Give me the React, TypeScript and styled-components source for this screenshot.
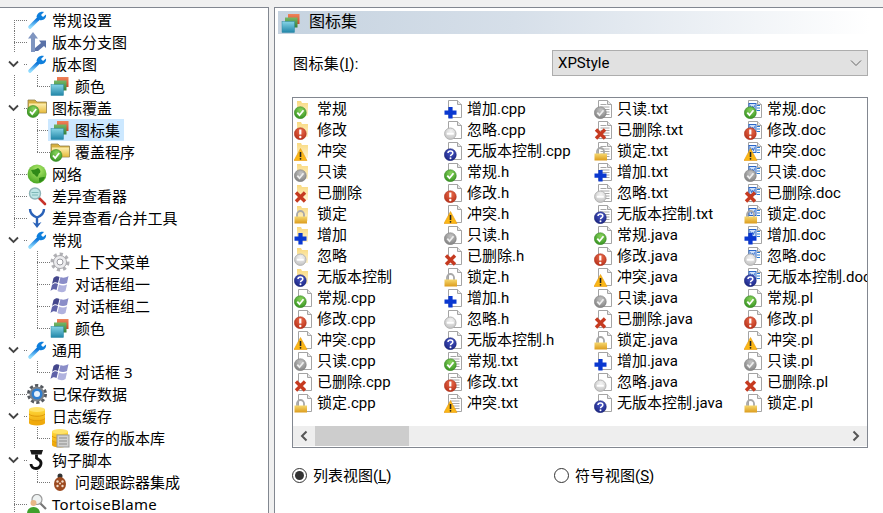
import React from 'react';
import styled, { createGlobalStyle } from 'styled-components';

const GlobalStyle = createGlobalStyle`
  html, body {
    margin: 0;
    padding: 0;
    background: #f0f0f0;
  }
  body {
    font-family: "Noto Sans", "Noto Sans CJK SC", sans-serif;
    font-size: 15px;
    color: #000;
  }
`;

const Defs = styled.svg`
  display: block;
  width: 0;
  height: 0;
`;

const Window = styled.div`
  display: flex;
  width: 883px;
  height: 513px;
  padding-top: 7px;
  box-sizing: border-box;
  overflow: hidden;
`;

const TreePanel = styled.div`
  width: 269px;
  box-sizing: border-box;
  padding-top: 1px;
  background: #fff;
  border-top: 1px solid #828790;
  border-right: 1px solid #828790;
  overflow: hidden;
`;

const TreeRow = styled.div`
  display: flex;
  align-items: center;
  height: 22px;
`;

const dots = 'repeating-linear-gradient(to bottom, #777 0 1px, transparent 1px 2px)';
const hdots = 'repeating-linear-gradient(to right, #777 0 1px, transparent 1px 2px)';

type Line = 'none' | 'down' | 'up' | 'full';

const lineSize: Record<Line, string> = { none: '0 0', down: '1px 11px', up: '1px 11px', full: '1px 22px' };
const lineTop: Record<Line, string> = { none: '0', down: '11px', up: '0', full: '0' };

const Gutter = styled.div<{ $w: number; $x: number; $line: Line; $tick: number }>`
  display: flex;
  align-items: center;
  flex: none;
  width: ${p => p.$w}px;
  height: 22px;
  background-image: ${dots}, ${hdots};
  background-repeat: no-repeat;
  background-size: ${p => lineSize[p.$line]}, ${p => p.$tick}px 1px;
  background-position:
    ${p => p.$x}px ${p => lineTop[p.$line]},
    ${p => p.$w - p.$tick}px 11px;
`;

const Chevron = styled.svg`
  width: 11px;
  height: 8px;
  margin-left: 8px;
`;

const Node = styled.div<{ $selected?: boolean }>`
  display: flex;
  align-items: center;
  height: 22px;
  margin-left: ${p => (p.$selected ? '-2px' : '0')};
  padding: ${p => (p.$selected ? '0 0 0 2px' : '0')};
  background: ${p => (p.$selected ? '#cce8ff' : 'transparent')};
  width: ${p => (p.$selected ? '76px' : 'auto')};
  box-sizing: border-box;
`;

const NodeIcon = styled.svg`
  flex: none;
  width: 20px;
  height: 20px;
  margin-right: 5px;
`;

const NodeLabel = styled.span<{ $latin?: boolean }>`
  margin-top: -1px;
  white-space: nowrap;
  line-height: 22px;
  letter-spacing: ${p => (p.$latin ? '0.3px' : '0')};
`;

const Pane = styled.div`
  flex: 1;
  margin-left: 5px;
  box-sizing: border-box;
  padding-top: 3px;
  background: #fff;
  border-top: 1px solid #828790;
  border-left: 1px solid #828790;
  display: flex;
  flex-direction: column;
  font-family: Roboto, "Noto Sans CJK SC", sans-serif;
`;

const Banner = styled.div`
  display: flex;
  align-items: center;
  gap: 8px;
  height: 23px;
  margin: 0 13px 16px 3px;
  padding-left: 3px;
  background: linear-gradient(to right, #c6d3e0, #d6dfe9 40%, #fff);
  font-size: 16px;
`;

const BannerIcon = styled.svg`
  width: 20px;
  height: 20px;
  margin-top: 1px;
`;

const BannerText = styled.span`
  margin-top: -6px;
`;

const Body = styled.div`
  display: flex;
  flex-direction: column;
  width: 576px;
  margin-left: 17px;
`;

const SetRow = styled.div`
  display: flex;
  align-items: center;
  justify-content: space-between;
  height: 26px;
  margin-bottom: 21px;
`;

const FieldLabel = styled.label`
  margin: -2px 0 0 1px;
  letter-spacing: 0.4px;
`;

const Mnemonic = styled.span`
  text-decoration: underline;
`;

const Select = styled.div`
  display: flex;
  align-items: center;
  justify-content: space-between;
  width: 316px;
  height: 26px;
  box-sizing: border-box;
  padding: 0 4px 0 5px;
  background: #e1e1e1;
  border: 1px solid #adadad;
`;

const ListBox = styled.div`
  display: flex;
  flex-direction: column;
  height: 351px;
  box-sizing: border-box;
  border: 1px solid #828790;
  overflow: hidden;
`;

const ListGrid = styled.div`
  flex: 1;
  display: grid;
  grid-auto-flow: column;
  grid-template-rows: repeat(15, 21px);
  grid-auto-columns: 150px;
  padding-left: 1px;
  overflow: hidden;
`;

const ListItem = styled.div`
  display: flex;
  align-items: center;
  gap: 3px;
  white-space: nowrap;
`;

const ListLabel = styled.span`
  margin-top: -2px;
`;

const StatusSvg = styled.svg`
  flex: none;
  width: 20px;
  height: 20px;
`;

const ScrollBar = styled.div`
  display: flex;
  align-items: stretch;
  justify-content: space-between;
  height: 20px;
  margin: 0 0 1px 0;
  background: #eee;
`;

const ScrollEnd = styled.div`
  display: flex;
  align-items: center;
  justify-content: center;
  width: 22px;
`;

const ScrollThumb = styled.div`
  width: 94px;
  background: #cdcdcd;
`;

const ScrollTrack = styled.div`
  flex: 1;
`;

const Radios = styled.div`
  display: grid;
  grid-template-columns: 262px 1fr;
  margin-top: 16px;
`;

const RadioLabel = styled.label`
  display: flex;
  align-items: center;
  gap: 6px;
  height: 22px;
`;

const RadioText = styled.span`
  margin-top: -2px;
`;

const RadioDot = styled.span<{ $on?: boolean }>`
  display: flex;
  align-items: center;
  justify-content: center;
  width: 15px;
  height: 15px;
  box-sizing: border-box;
  border: 1px solid #333;
  border-radius: 50%;

  &::after {
    content: '';
    width: 9px;
    height: 9px;
    border-radius: 50%;
    background: ${p => (p.$on ? '#333' : 'transparent')};
  }
`;

const ballGradient = (id: string, light: string, dark: string) => (
  <radialGradient id={id} cx="0.55" cy="0.3" r="0.8">
    <stop offset="0" stopColor={light} />
    <stop offset="1" stopColor={dark} />
  </radialGradient>
);

const slopeGradient = (id: string, top: string, bottom: string) => (
  <linearGradient id={id} x1="0" y1="0" x2="0" y2="1">
    <stop offset="0" stopColor={top} />
    <stop offset="1" stopColor={bottom} />
  </linearGradient>
);

const SharedGradients = () => (
  <Defs>
    <defs>
      {ballGradient('ballGreen', '#8ad45e', '#2a8a18')}
      {ballGradient('ballRed', '#ea6a4a', '#b02a14')}
      {ballGradient('ballGrey', '#c4c4c4', '#787878')}
      {ballGradient('ballNavy', '#4a58c8', '#141e78')}
      {ballGradient('ballPale', '#f4f4f4', '#bcbcbc')}
      {ballGradient('ballGlobe', '#b4ec70', '#3c9e18')}
      {slopeGradient('sheetRed', '#f0835a', '#c94c2a')}
      {slopeGradient('sheetGreen', '#74b868', '#35803c')}
      {slopeGradient('sheetBlue', '#86d4e6', '#2186a8')}
      {slopeGradient('wrenchBlue', '#0a72d8', '#8fdcff')}
      {slopeGradient('gold', '#f6d870', '#dc9c1c')}
      {slopeGradient('coin', '#ffd93c', '#efa90c')}
      {slopeGradient('folderFace', '#fdf0b0', '#e8bc40')}
      {slopeGradient('sliver', '#f9d97e', '#fff4d0')}
    </defs>
  </Defs>
);

/* tree icons, all on a 20 unit box */
const Stack = () => (
  <>
    <rect x="7" y="1" width="11.5" height="10" fill="url(#sheetRed)" />
    <rect x="4" y="4.5" width="12.5" height="10" fill="url(#sheetGreen)" />
    <rect x="1" y="8.5" width="12.5" height="11" fill="url(#sheetBlue)" stroke="#2f8aa8" strokeWidth=".5" />
  </>
);
const Wrench = () => (
  <>
    <path d="M3 17 11 9" stroke="url(#wrenchBlue)" strokeWidth="3.6" strokeLinecap="round" />
    <path d="M9.500 7C10 3.500 13 1 17 2l-3 3 2 2 3-2.500c.6 3.500-2.500 6.600-6.500 5.500z" fill="#0e7fdc" />
  </>
);
const Branch = () => (
  <>
    <path d="M6 0 1 6.500h3V20h4V6.500h3z" fill="#7f95c0" />
    <path d="M8 16l6-5-2-2.500h7v7.500l-2-2-6 5H8z" fill="#5a72a8" />
  </>
);
const Folder = () => (
  <>
    <path d="M1 2h7l2 2h9.500v11H1z" fill="#d8b040" stroke="#8f8050" strokeWidth=".8" />
    <path d="M2 5.500h17v9H2z" fill="url(#folderFace)" />
  </>
);
const FolderCheck = () => (
  <>
    <Folder />
    <CheckMark cx={6} cy={13.500} />
  </>
);
const Globe = () => (
  <>
    <circle cx="10" cy="10" r="9.500" fill="url(#ballGlobe)" />
    <path d="M4 6c3 0 5-1 7-2 2 1 3 3 2 5-2 0-1 3-3 4-2-1-2-3-4-3z" fill="#2f8a18" />
    <path d="M12 14c2-1 4-1 6-1-1 3-3 5-6 5z" fill="#2f8a18" />
  </>
);
const Magnifier = () => (
  <>
    <path d="M11 11l7 7" stroke="#c8332a" strokeWidth="2.600" strokeLinecap="round" />
    <circle cx="8" cy="7.500" r="5.500" fill="#bfe6e6" stroke="#8fb4b8" strokeWidth="1.400" />
    <path d="M4.500 6.500h7M5 9h6" stroke="#7fb8b8" />
  </>
);
const MergeY = () => (
  <>
    <path d="M3 1c0 5 3 7 7 8.500 4-1.500 7-3.500 7-8.500M10 9v7" fill="none" stroke="#2a62b8" strokeWidth="2.400" />
    <path d="M5.500 14l4.500 6 4.500-6-4.500 2z" fill="#2a62b8" />
  </>
);
const Gear = () => (
  <>
    <circle cx="10" cy="10" r="7.500" fill="none" stroke="#b0b0b4" strokeWidth="4" strokeDasharray="3 2.800" />
    <circle cx="10" cy="10" r="6.500" fill="#ececee" stroke="#a8a8ac" />
    <circle cx="10" cy="10" r="3" fill="#fff" stroke="#9a9aa0" />
  </>
);
const Flag = () => (
  <>
    <path d="M3.500 4c2-2 4-2 6-1L8 9C6 8 4 8 2 10z" fill="#44478c" />
    <path d="M10.500 3c2 1 5 1 8-1l-1.500 7c-3 1.500-6 1-8 0z" fill="#8a8dc8" />
    <path d="M2 11c2-2 4-2 6-1l-1.500 6c-2-1-4-1-6 1z" fill="#5f62a8" />
    <path d="M9 10.500c2 1 5 1.500 8 0L15.500 17c-3 2-6 1-8 0z" fill="#b0b2de" />
  </>
);
const SavedGear = () => (
  <>
    <circle cx="10" cy="10" r="8.500" fill="none" stroke="#55595f" strokeWidth="3" strokeDasharray="3.200 2.200" />
    <circle cx="10" cy="10" r="7.500" fill="#7d8288" />
    <circle cx="10" cy="10" r="5.500" fill="#2f7fd0" />
    <circle cx="10" cy="10" r="3" fill="#e8f2fc" />
  </>
);
const Coins = () => (
  <>
    <rect x="2" y="3" width="16" height="14" fill="url(#coin)" />
    <ellipse cx="10" cy="17" rx="8" ry="2.500" fill="#efa90c" />
    <path d="M2 8c2 3 14 3 16 0M2 12.500c2 3 14 3 16 0" fill="none" stroke="#e09a0a" />
    <ellipse cx="10" cy="3.500" rx="8" ry="2.500" fill="#ffe36a" />
  </>
);
const CachedRepo = () => (
  <>
    <Coins />
    <rect x="7" y="7" width="12" height="12" fill="#d0d0d0" stroke="#9a9a9a" />
    <path d="M9 10h8M9 13h8M9 16h8" stroke="#8c8c8c" />
  </>
);
const Hook = () => (
  <>
    <path d="M3 0h13l-1.500 4.500H4.500z" fill="#1a1a1a" />
    <path d="M9.500 4.500V8l3.500 2.500c2.500 3 0 8-4 8-3 0-5-2-5-4.500" fill="none" stroke="#111" strokeWidth="2.800" />
  </>
);
const Bug = () => (
  <>
    <circle cx="10" cy="4" r="2.500" fill="#333" />
    <ellipse cx="10" cy="12" rx="6" ry="7" fill="#9c4a20" />
    <circle cx="7.500" cy="9.500" r="1.200" fill="#f3dcc8" />
    <circle cx="12.500" cy="9.500" r="1.200" fill="#f3dcc8" />
    <circle cx="7.500" cy="14" r="1.200" fill="#f3dcc8" />
    <circle cx="12.500" cy="14" r="1.200" fill="#f3dcc8" />
    <circle cx="10" cy="11.500" r="1" fill="#f3dcc8" />
  </>
);
const Blame = () => (
  <>
    <path d="M13 9l6 6" stroke="#777" strokeWidth="2.200" />
    <circle cx="10" cy="5.500" r="5" fill="#eef2f2" stroke="#9a9a9a" strokeWidth="1.200" />
    <circle cx="6.500" cy="9" r="3" fill="#e8b888" />
    <path d="M0 20c0-5 3-7 6.500-7s6.500 2 6.500 7z" fill="#3fa02c" />
  </>
);

const treeIcons = {
  wrench: Wrench,
  branch: Branch,
  stack: Stack,
  folder: FolderCheck,
  globe: Globe,
  lens: Magnifier,
  merge: MergeY,
  gear: Gear,
  flag: Flag,
  saved: SavedGear,
  coins: Coins,
  cache: CachedRepo,
  hook: Hook,
  bug: Bug,
  blame: Blame,
};

type TreeItem = {
  label: string;
  icon: keyof typeof treeIcons;
  open?: boolean;
  first?: boolean;
  child?: boolean;
  last?: boolean;
  selected?: boolean;
};

const tree: TreeItem[] = [
  { label: '常规设置', icon: 'wrench', first: true },
  { label: '版本分支图', icon: 'branch' },
  { label: '版本图', icon: 'wrench', open: true },
  { label: '颜色', icon: 'stack', child: true, last: true },
  { label: '图标覆盖', icon: 'folder', open: true },
  { label: '图标集', icon: 'stack', child: true, selected: true },
  { label: '覆盖程序', icon: 'folder', child: true, last: true },
  { label: '网络', icon: 'globe' },
  { label: '差异查看器', icon: 'lens' },
  { label: '差异查看/合并工具', icon: 'merge' },
  { label: '常规', icon: 'wrench', open: true },
  { label: '上下文菜单', icon: 'gear', child: true },
  { label: '对话框组一', icon: 'flag', child: true },
  { label: '对话框组二', icon: 'flag', child: true },
  { label: '颜色', icon: 'stack', child: true, last: true },
  { label: '通用', icon: 'wrench', open: true },
  { label: '对话框 3', icon: 'flag', child: true, last: true },
  { label: '已保存数据', icon: 'saved' },
  { label: '日志缓存', icon: 'coins', open: true },
  { label: '缓存的版本库', icon: 'cache', child: true, last: true },
  { label: '钩子脚本', icon: 'hook', open: true },
  { label: '问题跟踪器集成', icon: 'bug', child: true, last: true },
  { label: 'TortoiseBlame', icon: 'blame' },
];

/* status overlays, sitting at the lower left of the 20 unit box */
function CheckMark({ cx, cy }: { cx: number; cy: number }) {
  return (
    <>
      <circle cx={cx} cy={cy} r="6" fill="url(#ballGreen)" stroke="#2c7e18" strokeWidth=".5" />
      <path d={`M${cx - 3} ${cy}l2.200 2.500 4-5`} fill="none" stroke="#fff" strokeWidth="1.800" />
    </>
  );
}

type Status = 'normal' | 'modified' | 'conflict' | 'readonly' | 'deleted' | 'locked' | 'added' | 'ignored' | 'unversioned';
type Base = 'folder' | 'blank' | 'text' | 'doc';

function Overlay({ status }: { status: Status }) {
  switch (status) {
    case 'normal':
      return <CheckMark cx={6.300} cy={13.700} />;
    case 'modified':
      return (
        <>
          <circle cx="6.300" cy="13.700" r="6" fill="url(#ballRed)" stroke="#a82a16" strokeWidth=".5" />
          <path d="M6.300 9.500v5" stroke="#fff" strokeWidth="2.200" />
          <circle cx="6.300" cy="17" r="1.200" fill="#fff" />
        </>
      );
    case 'conflict':
      return (
        <>
          <path d="M6.500 7.500 13 19.500H0z" fill="#fbb715" stroke="#e89a10" strokeWidth=".6" />
          <path d="M6.500 11v5" stroke="#222" strokeWidth="1.600" />
          <circle cx="6.500" cy="17.800" r=".9" fill="#222" />
        </>
      );
    case 'readonly':
      return (
        <>
          <circle cx="6.300" cy="13.700" r="6" fill="url(#ballGrey)" stroke="#777" strokeWidth=".5" />
          <path d="M3.300 13.700l2.200 2.500 4-5" fill="none" stroke="#eee" strokeWidth="1.800" />
        </>
      );
    case 'deleted':
      return <path d="M2 9.500 11 18.500M11 9.500 2 18.500" stroke="#c63a20" strokeWidth="3.400" />;
    case 'locked':
      return (
        <>
          <path d="M3 13V10.500a3.500 3.500 0 0 1 7 0V13" fill="none" stroke="#a8a8a8" strokeWidth="1.800" />
          <rect x=".5" y="12.500" width="12.500" height="7" fill="url(#gold)" />
        </>
      );
    case 'added':
      return <path d="M6.500 8v11.500M.5 13.700h12" stroke="#0a38d0" strokeWidth="4.200" />;
    case 'ignored':
      return (
        <>
          <circle cx="6.300" cy="13.700" r="5.700" fill="url(#ballPale)" stroke="#b4b4b4" />
          <path d="M2.800 13.700h7" stroke="#fff" strokeWidth="2" />
        </>
      );
    case 'unversioned':
      return (
        <>
          <circle cx="6.300" cy="13.700" r="6" fill="url(#ballNavy)" stroke="#141e70" strokeWidth=".5" />
          <path d="M4 12c0-2.800 4.800-2.800 4.800 0 0 1.600-2.300 1.500-2.300 3.200" fill="none" stroke="#fff" strokeWidth="1.500" />
          <circle cx="6.500" cy="17.300" r="1" fill="#fff" />
        </>
      );
  }
}

function BaseShape({ base }: { base: Base }) {
  if (base === 'folder') {
    return <path d="M3 2h4l1 2h6v13H3z" fill="url(#sliver)" />;
  }
  return (
    <>
      <path d="M4.500 1.500h9l4 4v13h-13z" fill="#fff" stroke="#a4a4a4" />
      <path d="M13.500 1.500v4h4" fill="#e8e8e8" stroke="#a4a4a4" />
      {base === 'text' && <path d="M6.500 5.500h6M6.500 8h9M6.500 10.500h9M6.500 13h9M6.500 15.500h9" stroke="#a8a8a8" />}
      {base === 'doc' && (
        <>
          <rect x="5" y="4.500" width="7" height="7" fill="#cfe0f8" stroke="#2a66c8" />
          <path d="M6.500 6.500l1 3 1-2 1 2 1-3" fill="none" stroke="#2a66c8" />
          <path d="M13 6.500h3M13 9h3M13 11.500h3" stroke="#2a7ad0" />
        </>
      )}
    </>
  );
}

const StatusIcon = ({ base, status }: { base: Base; status: Status }) => (
  <StatusSvg viewBox="0 0 20 20">
    <BaseShape base={base} />
    <Overlay status={status} />
  </StatusSvg>
);

const names: [string, Status][] = [
  ['常规', 'normal'],
  ['修改', 'modified'],
  ['冲突', 'conflict'],
  ['只读', 'readonly'],
  ['已删除', 'deleted'],
  ['锁定', 'locked'],
  ['增加', 'added'],
  ['忽略', 'ignored'],
  ['无版本控制', 'unversioned'],
];

const groups: [string, Base][] = [
  ['', 'folder'],
  ['.cpp', 'blank'],
  ['.h', 'blank'],
  ['.txt', 'text'],
  ['.java', 'blank'],
  ['.doc', 'doc'],
  ['.pl', 'blank'],
];

// the list stops at the fourth column, that is all the box shows
const items = groups
  .flatMap(([ext, base]) => names.map(([name, status]) => ({ label: name + ext, base, status })))
  .slice(0, 60);

export default function App() {
  return (
    <>
      <GlobalStyle />
      <SharedGradients />
      <Window>
        <TreePanel>
          {tree.map((item, i) => {
            const Icon = treeIcons[item.icon];
            return (
              <TreeRow key={i}>
                <Gutter
                  $w={27}
                  $x={14}
                  $line={item.open ? 'none' : item.first ? 'down' : 'full'}
                  $tick={item.open ? 3 : item.child ? 0 : 13}
                >
                  {item.open && (
                    <Chevron viewBox="0 0 11 8">
                      <path d="M1 1.500 5.500 6 10 1.500" fill="none" stroke="#444" strokeWidth="1.800" />
                    </Chevron>
                  )}
                </Gutter>
                {item.child && <Gutter $w={23} $x={10} $line={item.last ? 'up' : 'full'} $tick={13} />}
                <Node $selected={item.selected}>
                  <NodeIcon viewBox="0 0 20 20">
                    <Icon />
                  </NodeIcon>
                  <NodeLabel $latin={item.icon === 'blame'}>{item.label}</NodeLabel>
                </Node>
              </TreeRow>
            );
          })}
        </TreePanel>
        <Pane>
          <Banner>
            <BannerIcon viewBox="0 0 20 20">
              <Stack />
            </BannerIcon>
            <BannerText>图标集</BannerText>
          </Banner>
          <Body>
            <SetRow>
              <FieldLabel>
                图标集(<Mnemonic>I</Mnemonic>):
              </FieldLabel>
              <Select>
                XPStyle
                <svg width="14" height="8" viewBox="0 0 14 8">
                  <path d="M2 1.500 7 6.500 12 1.500" fill="none" stroke="#666" />
                </svg>
              </Select>
            </SetRow>
            <ListBox>
              <ListGrid>
                {items.map(item => (
                  <ListItem key={item.label}>
                    <StatusIcon base={item.base} status={item.status} />
                    <ListLabel>{item.label}</ListLabel>
                  </ListItem>
                ))}
              </ListGrid>
              <ScrollBar>
                <ScrollEnd>
                  <svg width="8" height="12" viewBox="0 0 8 12">
                    <path d="M6.500 1.500 2 6l4.500 4.500" fill="none" stroke="#555" strokeWidth="2" />
                  </svg>
                </ScrollEnd>
                <ScrollThumb />
                <ScrollTrack />
                <ScrollEnd>
                  <svg width="8" height="12" viewBox="0 0 8 12">
                    <path d="M1.500 1.500 6 6l-4.500 4.500" fill="none" stroke="#555" strokeWidth="2" />
                  </svg>
                </ScrollEnd>
              </ScrollBar>
            </ListBox>
            <Radios>
              <RadioLabel>
                <RadioDot $on />
                <RadioText>
                  列表视图(<Mnemonic>L</Mnemonic>)
                </RadioText>
              </RadioLabel>
              <RadioLabel>
                <RadioDot />
                <RadioText>
                  符号视图(<Mnemonic>S</Mnemonic>)
                </RadioText>
              </RadioLabel>
            </Radios>
          </Body>
        </Pane>
      </Window>
    </>
  );
}
